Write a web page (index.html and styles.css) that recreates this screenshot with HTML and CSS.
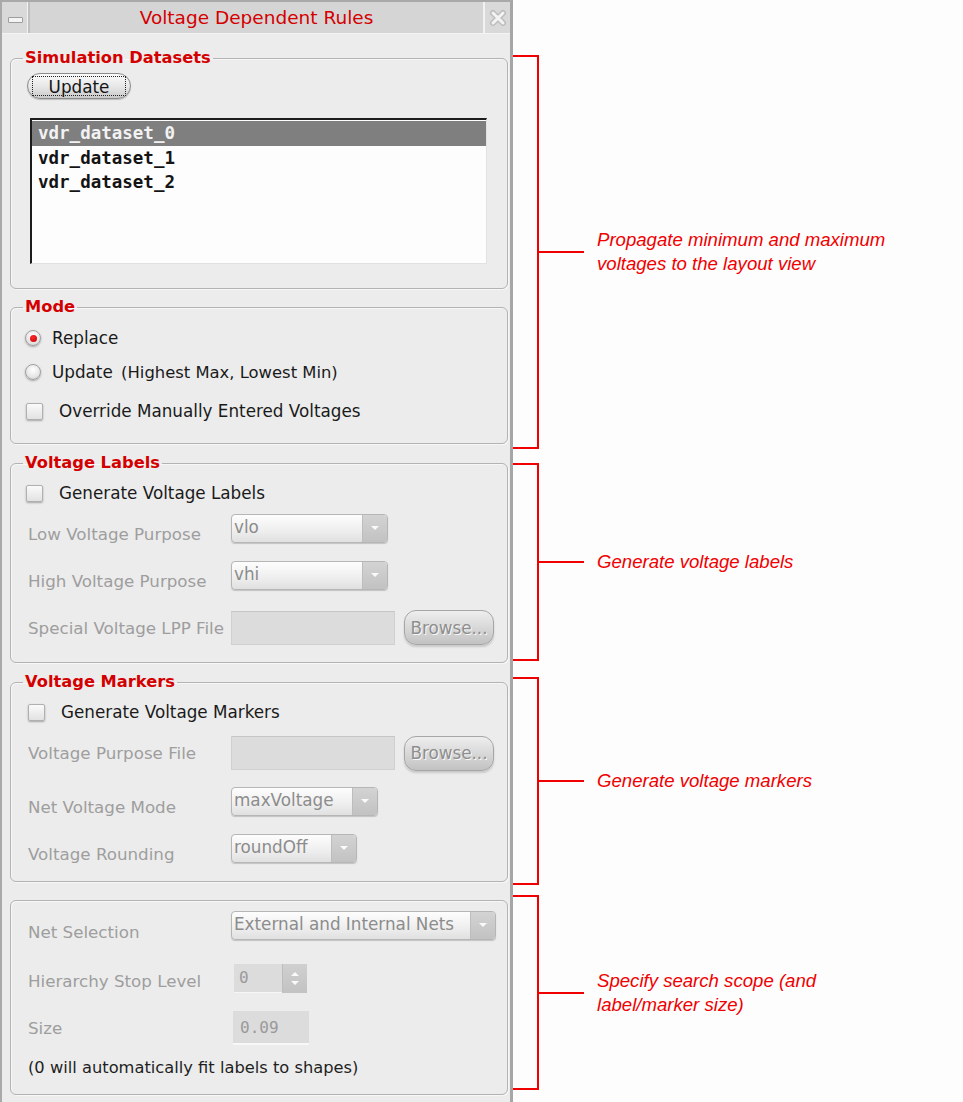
FILE: index.html
```html
<!DOCTYPE html>
<html lang="en">
<head>
<meta charset="utf-8">
<title>Voltage Dependent Rules</title>
<link rel="stylesheet" href="styles.css">
</head>
<body>
<div class="page">
  <div class="window">
    <div class="titlebar">
      <div class="tb-btn tb-min"><span class="min-glyph"></span></div>
      <div class="title">Voltage Dependent Rules</div>
      <div class="tb-btn tb-close">
        <svg width="20" height="20" viewBox="0 0 20 20">
          <path d="M5 5 L15 15 M15 5 L5 15" stroke="#bdbdbd" stroke-width="6" stroke-linecap="round" fill="none"/>
          <path d="M5 5 L15 15 M15 5 L5 15" stroke="#f3f3f3" stroke-width="3" stroke-linecap="round" stroke-dasharray="2 1.5" fill="none"/>
        </svg>
      </div>
    </div>
    <div class="body">
      <fieldset class="group g-datasets">
        <legend>Simulation Datasets</legend>
        <div class="ds-body">
          <button class="btn-update"><span class="focus">Update</span></button>
          <div class="listbox">
            <div class="item selected">vdr_dataset_0</div>
            <div class="item">vdr_dataset_1</div>
            <div class="item">vdr_dataset_2</div>
          </div>
        </div>
      </fieldset>

      <fieldset class="group g-mode">
        <legend>Mode</legend>
        <div class="mode-body">
          <div class="opt-row"><span class="radio checked"></span>Replace</div>
          <div class="opt-row"><span class="radio"></span>Update <span class="paren">(Highest Max, Lowest Min)</span></div>
          <div class="opt-row check-row"><span class="checkbox"></span>Override Manually Entered Voltages</div>
        </div>
      </fieldset>

      <fieldset class="group g-labels">
        <legend>Voltage Labels</legend>
        <div class="sec-body lab-body">
          <div class="opt-row"><span class="checkbox"></span>Generate Voltage Labels</div>
          <div class="form-row">
            <span class="form-label">Low Voltage Purpose</span>
            <div class="combo w157"><span class="combo-text">vlo</span><span class="combo-arrow"><span class="tri"></span></span></div>
          </div>
          <div class="form-row">
            <span class="form-label">High Voltage Purpose</span>
            <div class="combo w157"><span class="combo-text">vhi</span><span class="combo-arrow"><span class="tri"></span></span></div>
          </div>
          <div class="form-row">
            <span class="form-label">Special Voltage LPP File</span>
            <div class="field"></div>
            <button class="browse">Browse...</button>
          </div>
        </div>
      </fieldset>

      <fieldset class="group g-markers">
        <legend>Voltage Markers</legend>
        <div class="sec-body mark-body">
          <div class="opt-row"><span class="checkbox cb-shift"></span>Generate Voltage Markers</div>
          <div class="form-row file-row">
            <span class="form-label">Voltage Purpose File</span>
            <div class="field"></div>
            <button class="browse">Browse...</button>
          </div>
          <div class="form-row gap-row">
            <span class="form-label">Net Voltage Mode</span>
            <div class="combo w147"><span class="combo-text">maxVoltage</span><span class="combo-arrow"><span class="tri"></span></span></div>
          </div>
          <div class="form-row">
            <span class="form-label">Voltage Rounding</span>
            <div class="combo w126"><span class="combo-text">roundOff</span><span class="combo-arrow"><span class="tri"></span></span></div>
          </div>
        </div>
      </fieldset>

      <div class="group g-scope">
        <div class="form-row">
          <span class="form-label">Net Selection</span>
          <div class="combo w265 combo-up"><span class="combo-text">External and Internal Nets</span><span class="combo-arrow"><span class="tri"></span></span></div>
        </div>
        <div class="form-row spin-row">
          <span class="form-label">Hierarchy Stop Level</span>
          <div class="spin">
            <span class="spin-val">0</span>
            <span class="spin-arrows"><span class="tri-up"></span><span class="tri"></span></span>
          </div>
        </div>
        <div class="form-row">
          <span class="form-label">Size</span>
          <div class="sizebox">0.09</div>
        </div>
        <div class="scope-note">(0 will automatically fit labels to shapes)</div>
      </div>
    </div>
  </div>

  <div class="notes">
    <div class="note n1">
      <div class="bracket"></div><div class="tick"></div>
      <div class="note-text">Propagate minimum and maximum<br>voltages to the layout view</div>
    </div>
    <div class="note n2">
      <div class="bracket"></div><div class="tick"></div>
      <div class="note-text">Generate voltage labels</div>
    </div>
    <div class="note n3">
      <div class="bracket"></div><div class="tick"></div>
      <div class="note-text">Generate voltage markers</div>
    </div>
    <div class="note n4">
      <div class="bracket"></div><div class="tick"></div>
      <div class="note-text">Specify search scope (and<br>label/marker size)</div>
    </div>
  </div>
</div>
</body>
</html>
```

FILE: styles.css
```css
* { box-sizing: border-box; }

body {
  margin: 0;
  background: #fdfdfd;
  font-family: "DejaVu Sans", "Liberation Sans", sans-serif;
}

.page {
  display: flex;
  align-items: flex-start;
}

/* ---------- window ---------- */
.window {
  flex: none;
  width: 513px;
  height: 1102px;
  background: #ececec;
  border-left: 2px solid #a9a9a9;
  border-top: 2px solid #a9a9a9;
  border-right: 3px solid #a6a6a6;
}

.titlebar {
  display: flex;
  height: 32px;
  background: #d5d5d5;
  border-bottom: 1px solid #f4f4f4;
}

.tb-btn {
  flex: none;
  width: 28px;
  display: flex;
  align-items: center;
  justify-content: center;
  background: #d9d9d9;
}

.tb-min { border-right: 2px solid #c0c0c0; box-shadow: inset -1px 0 0 #f2f2f2; }
.tb-close { border-left: 2px solid #f2f2f2; width: 27px; }

.min-glyph {
  display: block;
  width: 15px;
  height: 6px;
  margin-top: 4px;
  background: #f4f4f4;
  border: 1px solid #9d9d9d;
  border-radius: 1px;
}

.title {
  flex: 1;
  text-align: center;
  color: #d40000;
  font-size: 18.5px;
  line-height: 31px;
}

.body {
  padding: 0 2px 0 8px;
}

/* ---------- groups ---------- */
.group {
  margin: 0;
  padding: 0;
  min-width: 0;
  border: 1px solid #b3b3b3;
  border-radius: 6px;
  box-shadow: inset 1px 1px 0 #f7f7f7, 1px 1px 0 #f7f7f7;
}

.group legend {
  margin-left: 12px;
  padding: 0 2px;
  color: #d40000;
  font-weight: bold;
  font-size: 16.3px;
  line-height: 20px;
}

.g-datasets { margin-top: 14px; }
.g-mode { margin-top: 8px; }
.g-labels { margin-top: 9px; }
.g-markers { margin-top: 9px; }
.g-scope { margin-top: 18px; padding: 7px 0 16px 14px; }

.ds-body { padding: 5px 0 24px 16px; }

.btn-update {
  display: block;
  width: 104px;
  height: 26px;
  padding: 2px 4px;
  border: 1px solid #8a8a8a;
  border-radius: 13px;
  background: linear-gradient(#fbfbfb, #e6e6e6 55%, #c9c9c9);
  box-shadow: 0 1px 1px rgba(0,0,0,0.2);
  font-family: inherit;
}

.btn-update .focus {
  display: block;
  height: 100%;
  border: 1px dotted #222;
  color: #151515;
  font-size: 16.8px;
  line-height: 20px;
}

.listbox {
  margin: 19px 0 0 3px;
  width: 457px;
  height: 146px;
  padding-top: 1px;
  background: #fdfdfd;
  border-top: 2px solid #1c1c1c;
  border-left: 2px solid #1c1c1c;
  border-right: 1px solid #e2e2e2;
  border-bottom: 1px solid #e2e2e2;
  font-family: "DejaVu Sans Mono", monospace;
  font-weight: bold;
  font-size: 17.5px;
}

.item {
  height: 24.5px;
  line-height: 24px;
  padding-left: 6px;
  color: #141414;
}

.item.selected {
  background: #7f7f7f;
  color: #f2f2f2;
}

/* ---------- option rows ---------- */
.mode-body { padding: 4px 0 15px 14px; }

.opt-row {
  display: flex;
  align-items: center;
  height: 34px;
  color: #1a1a1a;
  font-size: 16.8px;
  white-space: pre;
}

.paren { font-size: 16.4px; margin-left: 3px; }

.check-row { margin-top: 5px; }

.radio {
  flex: none;
  width: 16px;
  height: 16px;
  margin-right: 11px;
  border-radius: 50%;
  border: 1px solid #a0a0a0;
  background: radial-gradient(circle at 50% 35%, #ffffff, #e6e6e6 60%, #c4c4c4);
  box-shadow: 0 1px 2px rgba(0,0,0,0.3);
  display: flex;
  align-items: center;
  justify-content: center;
}

.radio.checked::after {
  content: "";
  width: 7px;
  height: 7px;
  border-radius: 50%;
  background: radial-gradient(circle at 40% 35%, #ff2a2a, #c00000);
}

.checkbox {
  flex: none;
  width: 17px;
  height: 17px;
  margin-left: 1px;
  margin-right: 16px;
  border: 1px solid #b0b0b0;
  border-radius: 2px;
  background: linear-gradient(#fafafa, #e2e2e2);
  box-shadow: 0 1px 2px rgba(0,0,0,0.3);
}

.checkbox.cb-shift { margin-left: 3px; margin-right: 16px; }

/* ---------- form rows ---------- */
.sec-body { padding-left: 14px; padding-right: 13px; }
.lab-body { padding-top: 3px; padding-bottom: 11px; }
.mark-body { padding-top: 3px; padding-bottom: 4px; }

.form-row {
  display: flex;
  align-items: center;
  height: 47px;
  padding-left: 3px;
}

.file-row { height: 48px; }
.gap-row { margin-top: 6px; }
.spin-row { margin-top: 2px; }

.form-label {
  flex: none;
  width: 203px;
  color: #9e9e9e;
  font-size: 16.7px;
  line-height: 20px;
  white-space: nowrap;
}

.combo {
  display: flex;
  height: 29px;
  margin-bottom: 11px;
  border: 1px solid #b6b6b6;
  border-radius: 4px;
  background: linear-gradient(#fdfdfd, #eeeeee 60%, #e0e0e0);
  box-shadow: 0 1px 1px rgba(0,0,0,0.18);
  overflow: hidden;
}

.combo-up { margin-bottom: 13px; }

.w157 { width: 157px; }
.w147 { width: 147px; }
.w126 { width: 126px; }
.w265 { width: 265px; }

.combo-text {
  flex: 1;
  padding-left: 2px;
  color: #8c8c8c;
  font-size: 16.8px;
  line-height: 25px;
  white-space: nowrap;
  overflow: hidden;
}

.combo-arrow {
  flex: none;
  width: 25px;
  display: flex;
  align-items: center;
  justify-content: center;
  background: linear-gradient(#d3d3d3, #c2c2c2);
  border-left: 1px solid #bdbdbd;
}

.tri {
  width: 0;
  height: 0;
  border-left: 4px solid transparent;
  border-right: 4px solid transparent;
  border-top: 4px solid #fafafa;
}

.tri-up {
  width: 0;
  height: 0;
  border-left: 4px solid transparent;
  border-right: 4px solid transparent;
  border-bottom: 4px solid #fafafa;
}

.field {
  flex: none;
  width: 164px;
  height: 34px;
  background: #dcdcdc;
  border: 1px solid #d0d0d0;
  border-top-color: #c6c6c6;
}

.browse {
  flex: none;
  margin-left: 9px;
  width: 90px;
  height: 35px;
  padding: 0;
  border: 1px solid #a6a6a6;
  border-radius: 12px;
  background: linear-gradient(#eeeeee, #d6d6d6 55%, #c2c2c2);
  box-shadow: 0 2px 2px rgba(0,0,0,0.15);
  color: #8e8e8e;
  font-family: inherit;
  font-size: 16.8px;
  text-shadow: 1px 1px 0 #f8f8f8;
}

.spin {
  display: flex;
  width: 73px;
  height: 29px;
  margin-left: 3px;
  margin-bottom: 4px;
}

.spin-val {
  flex: 1;
  padding-left: 5px;
  background: #dcdcdc;
  border-bottom: 1px solid #f6f6f6;
  color: #9a9a9a;
  font-family: "DejaVu Sans Mono", monospace;
  font-size: 16px;
  line-height: 28px;
}

.spin-arrows {
  flex: none;
  width: 25px;
  display: flex;
  flex-direction: column;
  align-items: center;
  justify-content: center;
  gap: 5px;
  background: linear-gradient(#d0d0d0, #c2c2c2);
  border-left: 1px solid #bdbdbd;
}

.sizebox {
  width: 76px;
  height: 34px;
  margin-left: 2px;
  padding-left: 7px;
  background: #dcdcdc;
  border-bottom: 2px solid #f8f8f8;
  color: #9a9a9a;
  font-family: "DejaVu Sans Mono", monospace;
  font-size: 16px;
  line-height: 33px;
}

.scope-note {
  margin-top: 7px;
  padding-left: 3px;
  color: #1f1f1f;
  font-size: 16.3px;
  line-height: 20px;
}

/* ---------- annotations ---------- */
.notes {
  flex: none;
  padding-top: 55px;
}

.note {
  display: flex;
  align-items: center;
}

.bracket {
  flex: none;
  width: 26px;
  align-self: stretch;
  border: 2px solid #f00000;
  border-left: 0;
}

.tick {
  flex: none;
  width: 45px;
  height: 2px;
  background: #f00000;
}

.note-text {
  margin-left: 13px;
  color: #f00000;
  font-family: "Liberation Sans", Arial, sans-serif;
  font-style: italic;
  font-size: 18.6px;
  line-height: 24px;
  white-space: nowrap;
}

.n1 { height: 394px; }
.n2 { height: 198px; margin-top: 14px; }
.n3 { height: 208px; margin-top: 16px; }
.n4 { height: 195px; margin-top: 10px; }
```
